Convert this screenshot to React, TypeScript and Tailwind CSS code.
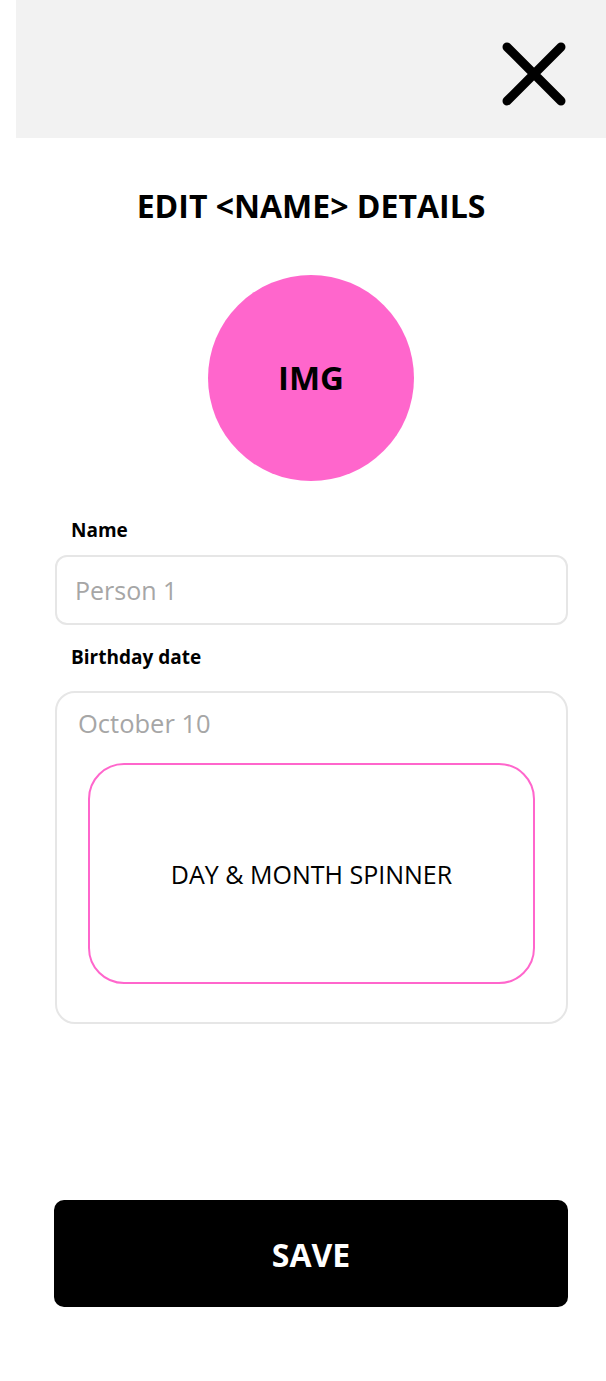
import React from "react";

export default function App() {
  return (
    <div className="w-[606px] h-[1381px] bg-white pl-[16px] font-['Open_Sans',sans-serif] text-black">
      <div className="flex flex-col">
        {/* Header */}
        <div className="h-[138px] bg-[#f2f2f2] flex justify-end items-start pt-[42px] pr-[40px]">
          <svg width="64" height="64" viewBox="0 0 64 64" fill="none">
            <path d="M5 5 L59 59 M59 5 L5 59" stroke="#000" strokeWidth="9" strokeLinecap="round" />
          </svg>
        </div>

        {/* Title */}
        <h1 className="mt-[46px] h-[44px] leading-[44px] text-center text-[32px] font-bold">
          EDIT &lt;NAME&gt; DETAILS
        </h1>

        {/* Avatar */}
        <div className="mt-[47px] flex justify-center">
          <div className="w-[206px] h-[206px] rounded-full bg-[#ff66cc] flex items-center justify-center">
            <span className="text-[33px] font-bold">IMG</span>
          </div>
        </div>

        {/* Form */}
        <div className="ml-[39px] mr-[38px] flex flex-col">
          <label className="mt-[35px] h-[28px] leading-[28px] pl-[16px] text-[19px] font-bold">Name</label>
          <div className="mt-[11px] h-[70px] rounded-[12px] border-2 border-[#e6e6e6] flex items-center pl-[18px] pt-[2px]">
            <span className="text-[25px] text-[#a6a6a6]">Person 1</span>
          </div>

          <label className="mt-[18px] h-[28px] leading-[28px] pl-[16px] text-[19px] font-bold">Birthday date</label>
          <div className="mt-[20px] h-[333px] rounded-[20px] border-2 border-[#e6e6e6] flex flex-col px-[31px]">
            <div className="h-[60px] flex items-center -ml-[10px]">
              <span className="text-[25.5px] text-[#a6a6a6]">October 10</span>
            </div>
            <div className="mt-[10px] h-[221px] rounded-[36px] border-2 border-[#ff66cc] flex items-center justify-center pt-[2px]">
              <span className="text-[25px]">DAY &amp; MONTH SPINNER</span>
            </div>
          </div>
        </div>

        {/* Save */}
        <div className="mt-[176px] ml-[38px] mr-[38px]">
          <button className="w-full h-[107px] rounded-[10px] bg-black text-white text-[32px] font-bold pt-[2px]">
            SAVE
          </button>
        </div>
      </div>
    </div>
  );
}
